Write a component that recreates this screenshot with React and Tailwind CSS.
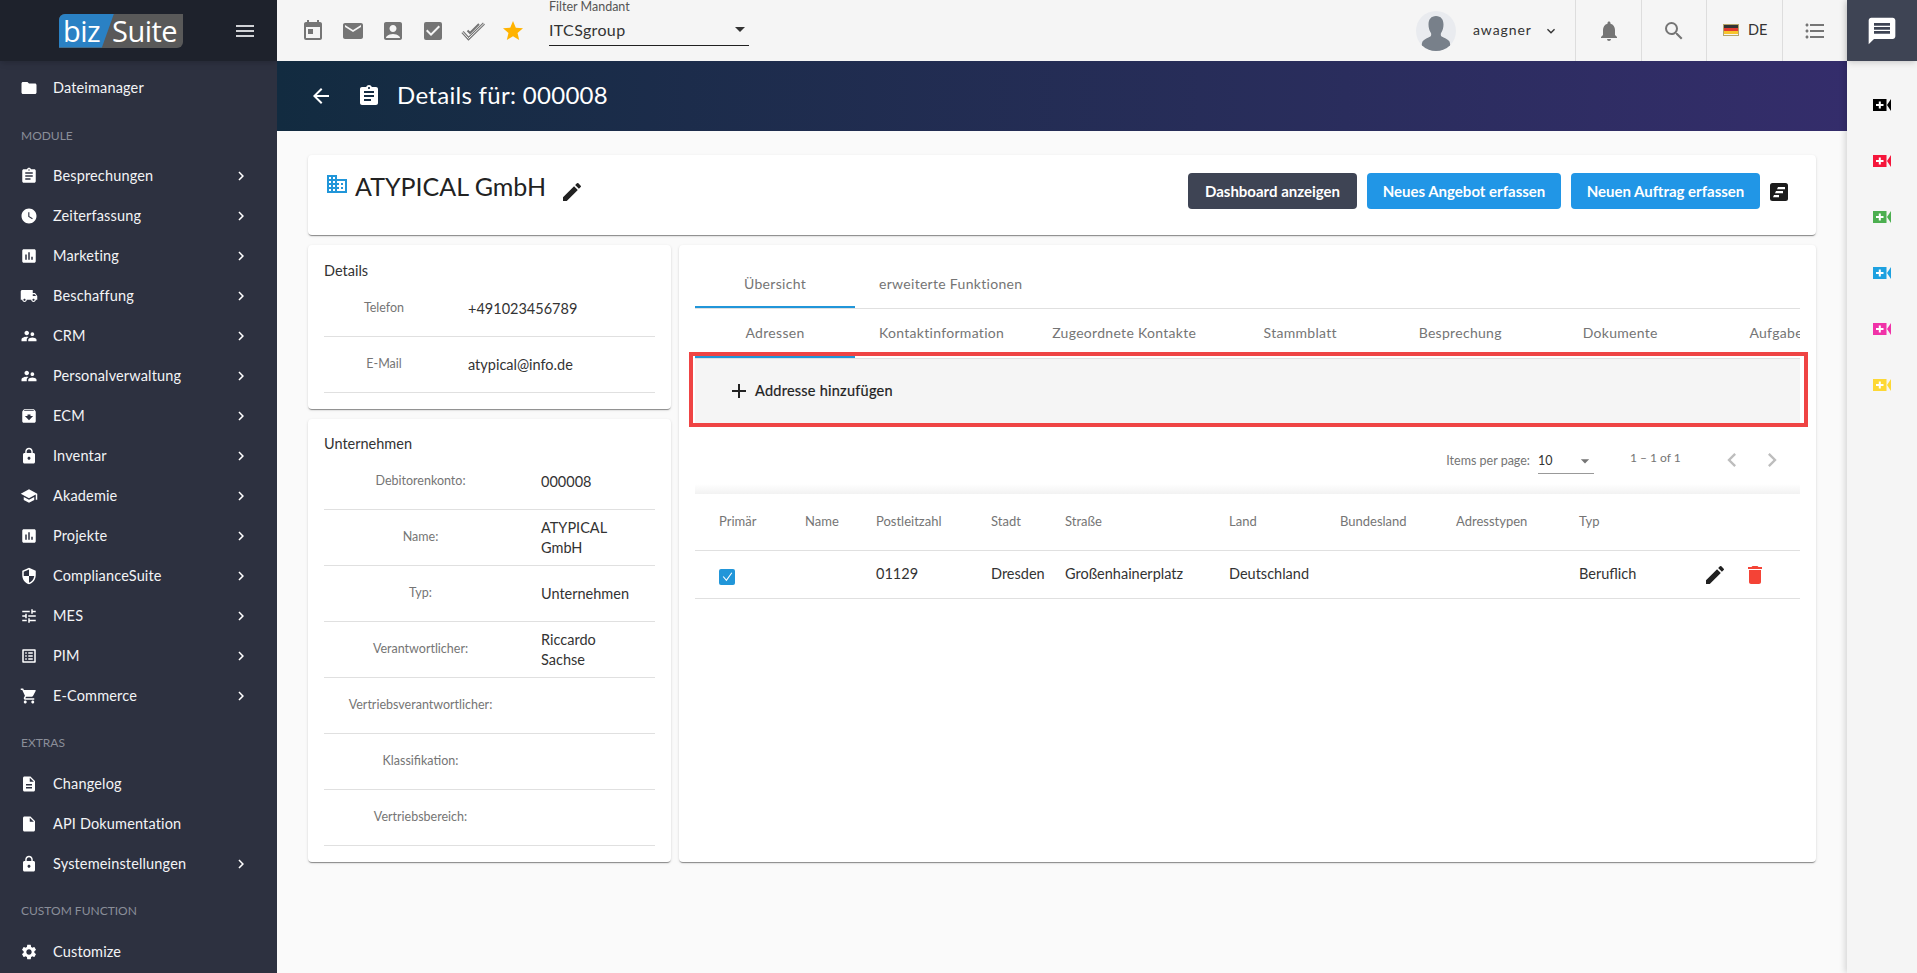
import React from "react";
import {
  MdFolder, MdAssignment, MdWatchLater, MdAssessment, MdLocalShipping, MdSupervisorAccount, MdArchive, MdLock, MdSchool, MdSecurity, MdTune, MdListAlt, MdShoppingCart, MdDescription, MdSettings, MdChevronRight, MdMenu, MdToday, MdEmail, MdAccountBox, MdCheckBox, MdStar, MdArrowBack, MdNotifications, MdSearch, MdFormatListBulleted, MdMessage, MdDomain, MdEdit, MdDelete, MdAdd, MdArrowDropDown, MdExpandMore, MdChevronLeft, MdInsertDriveFile,
} from "react-icons/md";

const font = "font-['Lato','Open_Sans',sans-serif]";

function NavItem({ icon: I, label, arrow = true }) {
  return (
    <div className="relative h-10 flex items-center pl-[53px] text-[14.5px] text-[#f3f4f6]">
      <I className="absolute left-[20px] text-[18px] text-white" />
      <span className="tracking-[0.15px]">{label}</span>
      {arrow && <MdChevronRight className="absolute left-[232px] text-[18px] text-white" />}
    </div>
  );
}

function NavHead({ children, className }) {
  return <div className={`h-4 pl-[21px] flex items-center text-[12px] text-[#8a8e99] ${className}`}>{children}</div>;
}

const modules = [
  [MdAssignment, "Besprechungen"], [MdWatchLater, "Zeiterfassung"], [MdAssessment, "Marketing"], [MdLocalShipping, "Beschaffung"], [MdSupervisorAccount, "CRM"], [MdSupervisorAccount, "Personalverwaltung"], [MdArchive, "ECM"], [MdLock, "Inventar"], [MdSchool, "Akademie"], [MdAssessment, "Projekte"], [MdSecurity, "ComplianceSuite"], [MdTune, "MES"], [MdListAlt, "PIM"], [MdShoppingCart, "E-Commerce"],
];

function Sidebar() {
  return (
    <aside className="w-[277px] shrink-0 h-[973px] overflow-hidden bg-[#2d3140] flex flex-col">
      <div className="h-[61px] shrink-0 bg-[#1e222c] flex items-center pl-[59px] relative shadow-md">
        <div className="w-[124px] h-[34px] bg-[#595959] rounded-br-md rounded-tl-md relative flex items-center text-white text-[29px] leading-none font-['Open_Sans',sans-serif] tracking-[-0.5px]">
          <div className="absolute left-0 top-0 h-full w-[55px] bg-[#2a81c4] rounded-tl-md [clip-path:polygon(0_0,100%_0,78%_100%,0_100%)]" />
          <span className="relative ml-[4px] w-[49px]">biz</span>
          <span className="relative">Suite</span>
        </div>
        <MdMenu className="absolute left-[233px] text-[24px] text-[#d1d2d6]" />
      </div>
      <div className="h-[7px]" />
      <NavItem icon={MdFolder} label="Dateimanager" arrow={false} />
      <NavHead className="mt-[20px] mb-[12px]">MODULE</NavHead>
      {modules.map(([i, l]) => <NavItem key={l} icon={i} label={l} />)}
      <NavHead className="mt-[19px] mb-[13px]">EXTRAS</NavHead>
      <NavItem icon={MdDescription} label="Changelog" arrow={false} />
      <NavItem icon={MdInsertDriveFile} label="API Dokumentation" arrow={false} />
      <NavItem icon={MdLock} label="Systemeinstellungen" />
      <NavHead className="mt-[19px] mb-[13px]">CUSTOM FUNCTION</NavHead>
      <NavItem icon={MdSettings} label="Customize" arrow={false} />
    </aside>
  );
}

function DoubleCheck() {
  return (
    <svg viewBox="0 0 24 20" className="w-[24px] h-[20px]" fill="none">
      <path d="M1.5 11l6 6.5L23 2.5" stroke="#757575" strokeWidth="3" />
      <path d="M1.5 11l6 6.5L23 2.5" stroke="#f5f5f5" strokeWidth="1" />
      <path d="M6.5 9.5l2.5 2.5L18 3" stroke="#757575" strokeWidth="2" />
    </svg>
  );
}

function Avatar() {
  return (
    <svg viewBox="0 0 40 40" className="w-10 h-10 rounded-full bg-[#e9ebef] mr-[17px]">
      <path fill="#78808a" d="M20 5c5 0 7.500 3.500 7.500 8.500 0 3-.8 6-2.300 8.200-.6.900-.6 3 .4 3.800 2.500 1.500 6 2.500 7.500 4.500 1 1.300 1.400 4 1.400 10H5.500c0-6 .4-8.700 1.400-10 1.500-2 5-3 7.500-4.500 1-.8 1-2.900.4-3.800-1.500-2.200-2.300-5.200-2.300-8.200C12.500 8.500 15 5 20 5z" />
    </svg>
  );
}

function Topbar() {
  const icons = [MdToday, MdEmail, MdAccountBox, MdCheckBox];
  return (
    <header className="h-[61px] shrink-0 bg-[#f5f5f5] flex items-center">
      <div className="flex items-center gap-[16px] pl-[24px] w-[272px]">
        {icons.map((I, n) => <I key={n} className="text-[24px] text-[#757575]" />)}
        <DoubleCheck />
        <MdStar className="text-[24px] text-[#ffb300]" />
      </div>
      <div className="w-[200px] h-[46px] self-start border-b border-[#212121] flex flex-col relative">
        <span className="text-[12.5px] leading-[14px] text-[#555]">Filter Mandant</span>
        <span className="text-[16px] leading-[20px] mt-[6px] text-[#333] tracking-[0.35px]">ITCSgroup</span>
        <MdArrowDropDown className="absolute right-[-3px] top-[17px] text-[24px] text-[#333]" />
      </div>
      <div className="ml-auto flex items-center h-full">
        <Avatar />
        <span className="text-[14px] tracking-[0.9px] text-[#333] w-[70px] mb-[2px]">awagner</span>
        <MdExpandMore className="text-[16px] text-[#333] mr-[16px]" />
        <div className="w-[66px] h-full border-l border-[#ddd] flex items-center justify-center"><MdNotifications className="text-[24px] text-[#757575]" /></div>
        <div className="w-[65px] h-full border-l border-[#ddd] flex items-center justify-center"><MdSearch className="text-[24px] text-[#757575]" /></div>
        <div className="w-[76px] h-full border-l border-[#ddd] flex items-center pl-[16px] gap-[9px]">
          <div className="w-[16px] h-[12px] flex flex-col border border-[#b5a56a] mb-[2px]">
            <div className="flex-1 bg-[#333]" /><div className="flex-1 bg-[#e23b30]" /><div className="flex-1 bg-[#f7c52c]" />
          </div>
          <span className="text-[14.5px] text-[#333] mb-[2px]">DE</span>
        </div>
        <div className="w-[65px] h-full border-l border-[#ddd] flex items-center justify-center"><MdFormatListBulleted className="text-[24px] text-[#757575]" /></div>
      </div>
    </header>
  );
}

function Banner() {
  return (
    <div className="h-[70px] shrink-0 bg-gradient-to-r from-[#122b40] to-[#342d6b] flex items-center text-white">
      <MdArrowBack className="ml-[32px] text-[24px]" />
      <MdAssignment className="ml-[24px] text-[24px]" />
      <span className="ml-[16px] text-[24px] tracking-[0.3px] mb-[2px]">Details für: 000008</span>
    </div>
  );
}

function Row({ label, value, labelW = "w-[193px]" }) {
  return (
    <div className="h-14 border-b border-[#e0e0e0] flex items-center mx-[16px]">
      <span className={`${labelW} shrink-0 text-center text-[12.5px] text-[#757575]`}>{label}</span>
      <span className="ml-[24px] text-[14.5px] leading-[20px] text-[#333] min-w-0">{value}</span>
    </div>
  );
}

const card = "bg-white rounded-[4px] shadow-[0_2px_1px_-1px_rgba(0,0,0,.3),0_1px_1px_0_rgba(0,0,0,.14),0_1px_3px_0_rgba(0,0,0,.12)]";

function LeftColumn() {
  return (
    <div className="w-[363px] shrink-0 flex flex-col gap-[10px]">
      <div className={`${card} h-[164px] pt-[16px]`}>
        <div className="pl-[16px] text-[14.5px] leading-[20px] text-[#333]">Details</div>
        <Row label="Telefon" value="+491023456789" labelW="w-[120px]" />
        <Row label="E-Mail" value="atypical@info.de" labelW="w-[120px]" />
      </div>
      <div className={`${card} h-[443px] pt-[15px]`}>
        <div className="pl-[16px] text-[14.5px] leading-[20px] text-[#333]">Unternehmen</div>
        <Row label="Debitorenkonto:" value="000008" />
        <Row label="Name:" value={<span className="block w-[90px]">ATYPICAL GmbH</span>} />
        <Row label="Typ:" value="Unternehmen" />
        <Row label="Verantwortlicher:" value={<span className="block w-[90px]">Riccardo Sachse</span>} />
        <Row label="Vertriebsverantwortlicher:" value="" />
        <Row label="Klassifikation:" value="" />
        <Row label="Vertriebsbereich:" value="" />
      </div>
    </div>
  );
}

function Tab({ label, active }) {
  return (
    <div className="relative min-w-[160px] px-6 pb-[2px] shrink-0 h-full flex items-center justify-center text-[14px] text-[#757575] whitespace-nowrap tracking-[0.3px]">
      {label}
      {active && <div className="absolute left-0 right-0 bottom-0 h-[2px] bg-[#2196d9]" />}
    </div>
  );
}

const columns = [
  ["w-[86px]", "Primär"], ["w-[71px]", "Name"], ["w-[115px]", "Postleitzahl"], ["w-[74px]", "Stadt"], ["w-[164px]", "Straße"], ["w-[111px]", "Land"], ["w-[116px]", "Bundesland"], ["w-[123px]", "Adresstypen"], ["w-[110px]", "Typ"],
];

function TableArea() {
  return (
    <div className="mx-[16px]">
      <div className="h-[67px] flex items-start justify-end pr-[14px] text-[#757575] bg-gradient-to-b from-white from-85% to-[#f2f2f2]">
        <span className="mt-[26px] mr-[8px] text-[12.5px] leading-[16px]">Items per page:</span>
        <div className="w-[56px] h-[33px] mt-[14px] border-b border-[#999] relative pt-[12px] text-[12.5px] leading-[16px] text-[#333]">
          10
          <MdArrowDropDown className="absolute right-[-1px] top-[10px] text-[20px] text-[#757575]" />
        </div>
        <span className="ml-[36px] mt-[23px] w-[88px] text-[12px] leading-[16px]">1 – 1 of 1</span>
        <MdChevronLeft className="mt-[19px] text-[28px] text-[#bdbdbd]" />
        <MdChevronRight className="ml-[12px] mt-[19px] text-[28px] text-[#bdbdbd]" />
      </div>
      <div className="h-[57px] flex items-center pl-[24px] pb-[1px] border-b border-[#e0e0e0] text-[13px] text-[#757575]">
        {columns.map(([w, l]) => <div key={l} className={`${w} shrink-0`}>{l}</div>)}
      </div>
      <div className="h-[48px] flex items-center pl-[24px] border-b border-[#e0e0e0] text-[14.5px] text-[#333]">
        <div className="w-[86px] shrink-0">
          <div className="w-[16px] h-[16px] rounded-[2px] bg-[#2196d9] flex items-center justify-center mt-[4px]">
            <svg viewBox="0 0 24 24" className="w-[13px] h-[13px]" fill="none" stroke="white" strokeWidth="2"><path d="M4 12l6 7L20 5" /></svg>
          </div>
        </div>
        <div className="w-[71px] shrink-0 h-px" />
        <div className="w-[115px] shrink-0 mb-[2px]">01129</div>
        <div className="w-[74px] shrink-0 mb-[2px]">Dresden</div>
        <div className="w-[164px] shrink-0 mb-[2px]">Großenhainerplatz</div>
        <div className="w-[111px] shrink-0 mb-[2px]">Deutschland</div>
        <div className="w-[116px] shrink-0 h-px" />
        <div className="w-[123px] shrink-0 h-px" />
        <div className="w-[110px] shrink-0 mb-[2px]">Beruflich</div>
        <MdEdit className="text-[24px] text-[#212121] shrink-0 ml-[14px]" />
        <MdDelete className="text-[24px] text-[#f44336] shrink-0 ml-[16px]" />
      </div>
    </div>
  );
}

function RightCard() {
  return (
    <div className={`${card} flex-1 min-w-0 h-[617px] pt-[15px]`}>
      <div className="mx-[16px] h-[49px] flex border-b border-[#e0e0e0]">
        <Tab label="Übersicht" active />
        <Tab label="erweiterte Funktionen" />
      </div>
      <div className="mx-[16px] h-[49px] flex overflow-hidden">
        <Tab label="Adressen" active />
        <Tab label="Kontaktinformation" />
        <Tab label="Zugeordnete Kontakte" />
        <Tab label="Stammblatt" />
        <Tab label="Besprechung" />
        <Tab label="Dokumente" />
        <Tab label="Aufgaben" />
      </div>
      <div className="ml-[10px] mr-[8px] border-[4px] border-[#ef4444] mt-[-6px] pt-[2px] pl-[2px] pr-[4px] h-[75px]">
        <div className="h-full bg-[#f5f5f5] border-t border-[#e0e0e0] flex items-center pl-[32px] text-[14.5px] text-[#222]">
          <MdAdd className="text-[24px] mr-[4px]" />
          <span className="tracking-[0.25px] [-webkit-text-stroke:0.2px_#222]">Addresse hinzufügen</span>
        </div>
      </div>
      <TableArea />
    </div>
  );
}

function VideoPlus({ color }) {
  return (
    <svg viewBox="0 0 18 12" className={`w-[18px] h-[12px] ${color}`}>
      <path fill="currentColor" d="M0 0h13.500v12H0zM14 6l4-6v12z" />
      <path fill="white" d="M5.800 2.500h2v2.500h2.700v2H7.800v2.500h-2V7H3V5h2.800z" />
    </svg>
  );
}

function RightRail() {
  const colors = ["text-black", "text-[#f5163b]", "text-[#4caf50]", "text-[#1ea1e0]", "text-[#f032a8]", "text-[#fdd835]"];
  return (
    <aside className="w-[70px] shrink-0 h-[973px] bg-[#f5f5f5] shadow-[-2px_0_6px_rgba(0,0,0,.15)] flex flex-col items-center">
      <div className="h-[61px] w-full bg-[#3e4454] flex items-center justify-center shadow-md">
        <MdMessage className="text-[32px] text-white" />
      </div>
      <div className="flex flex-col items-center gap-[44px] mt-[38px]">
        {colors.map((c) => <VideoPlus key={c} color={c} />)}
      </div>
    </aside>
  );
}

export default function App() {
  return (
    <div className={`${font} w-[1917px] h-[973px] overflow-hidden flex bg-[#fafafa]`}>
      <Sidebar />
      <div className="flex-1 min-w-0 flex flex-col">
        <Topbar />
        <Banner />
        <main className="px-[31px] pt-[24px] min-w-0">
          <div className={`${card} h-[80px] flex items-start pl-[17px] pr-[28px] mb-[10px]`}>
            <MdDomain className="mt-[17px] text-[24px] text-[#2196d9]" />
            <span className="ml-[6px] mt-[16px] text-[25px] leading-[30px] text-[#222]">ATYPICAL GmbH</span>
            <MdEdit className="ml-[14px] mt-[25px] text-[24px] text-[#212121]" />
            <div className="ml-auto flex items-start gap-[10px] mt-[18px]">
              <button className="h-9 w-[169px] rounded-[4px] bg-[#3e4454] text-white text-[15px] font-bold">Dashboard anzeigen</button>
              <button className="h-9 w-[194px] rounded-[4px] bg-[#2196e6] text-white text-[15px] font-bold">Neues Angebot erfassen</button>
              <button className="h-9 w-[189px] rounded-[4px] bg-[#2196e6] text-white text-[15px] font-bold">Neuen Auftrag erfassen</button>
              <svg viewBox="0 0 18 18" className="w-[18px] h-[18px] mt-[10px]">
                <rect width="18" height="18" rx="2.500" fill="#1c1c1c" />
                <path d="M8 4h7v2.200H7zM6 8h7v2.200H5zM4 12h5v2.200H3z" fill="white" />
              </svg>
            </div>
          </div>
          <div className="flex gap-[8px]">
            <LeftColumn />
            <RightCard />
          </div>
        </main>
      </div>
      <RightRail />
    </div>
  );
}
